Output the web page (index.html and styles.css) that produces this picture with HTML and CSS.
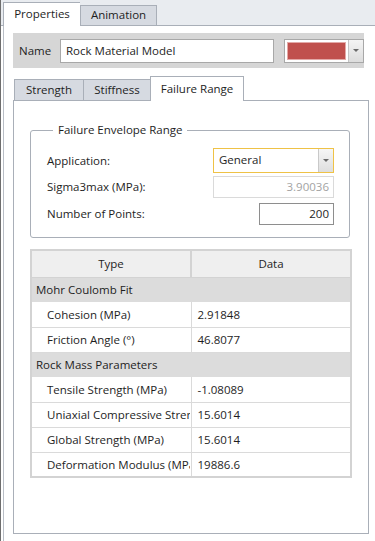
FILE: index.html
```html
<!DOCTYPE html>
<html lang="en">
<head>
    <meta charset="UTF-8">
    <meta name="viewport" content="width=device-width, initial-scale=1.0">
    <title>Rock Material Model</title>
    <link rel="stylesheet" href="styles.css">
</head>
<body>
    <div class="window">
        <div class="top-tabs">
            <div class="top-tab active">Properties</div>
            <div class="top-tab">Animation</div>
        </div>

        <div class="props-panel">
            <div class="name-band">
                <span class="name-label">Name</span>
                <div class="name-input">Rock Material Model</div>
                <div class="color-pick">
                    <div class="swatch-box"><div class="swatch"></div></div>
                    <div class="drop-btn"><span class="caret"></span></div>
                </div>
            </div>

            <div class="sub-tabs">
                <div class="sub-tab">Strength</div>
                <div class="sub-tab">Stiffness</div>
                <div class="sub-tab active">Failure Range</div>
            </div>

            <div class="sub-panel">
                <fieldset class="group">
                    <legend>Failure Envelope Range</legend>
                    <div class="field-row">
                        <span class="field-label">Application:</span>
                        <div class="combo">
                            <span class="combo-text">General</span>
                            <span class="combo-btn"><span class="caret"></span></span>
                        </div>
                    </div>
                    <div class="field-row">
                        <span class="field-label">Sigma3max (MPa):</span>
                        <div class="text-box disabled">3.90036</div>
                    </div>
                    <div class="field-row">
                        <span class="field-label">Number of Points:</span>
                        <div class="text-box short">200</div>
                    </div>
                </fieldset>

                <table class="grid">
                    <thead>
                        <tr><th>Type</th><th>Data</th></tr>
                    </thead>
                    <tbody>
                        <tr class="group-row"><td colspan="2">Mohr Coulomb Fit</td></tr>
                        <tr><td class="name-cell">Cohesion (MPa)</td><td>2.91848</td></tr>
                        <tr><td class="name-cell">Friction Angle (°)</td><td>46.8077</td></tr>
                        <tr class="group-row"><td colspan="2">Rock Mass Parameters</td></tr>
                        <tr><td class="name-cell">Tensile Strength (MPa)</td><td>-1.08089</td></tr>
                        <tr><td class="name-cell"><span class="clip">Uniaxial Compressive Strength (MPa)</span></td><td>15.6014</td></tr>
                        <tr><td class="name-cell">Global Strength (MPa)</td><td>15.6014</td></tr>
                        <tr><td class="name-cell"><span class="clip">Deformation Modulus (MPa)</span></td><td>19886.6</td></tr>
                    </tbody>
                </table>
            </div>
        </div>
    </div>
</body>
</html>
```

FILE: styles.css
```css
* {
    margin: 0;
    padding: 0;
    box-sizing: border-box;
}

body {
    font-family: 'Open Sans', 'Noto Sans', sans-serif;
    font-size: 11.5px;
    color: #1e1e1e;
    background: #ffffff;
}

.window {
    width: 375px;
    height: 541px;
    overflow: hidden;
    border-left: 1px solid #6e6e6e;
}

/* 上のタブ */
.top-tabs {
    height: 26px;
    background: #e9ecf0;
    border-bottom: 1px solid #a9afb8;
    display: flex;
    align-items: flex-end;
    padding-left: 2px;
}

.top-tab {
    height: 20px;
    line-height: 18px;
    background: #d6dae1;
    border: 1px solid #a9afb8;
    border-bottom: none;
    width: 77px;
    text-align: center;
    white-space: nowrap;
}

.top-tab.active {
    height: 24px;
    line-height: 21px;
    background: #ffffff;
    margin-bottom: -1px;
    border-right: none;
}

.props-panel {
    height: 515px;
    margin-left: 2px;
    border-left: 1px solid #b9bec6;
    padding: 7px 0 0 9px;
}

.name-band {
    width: 351px;
    height: 35px;
    background: #d6d6d6;
    display: flex;
    align-items: center;
    padding-left: 6px;
}

.name-label {
    width: 41px;
}

.name-input {
    width: 214px;
    height: 24px;
    background: #ffffff;
    border: 1px solid #a8a8a8;
    padding-left: 5px;
    line-height: 21px;
}

.color-pick {
    margin-left: 10px;
    width: 80px;
    height: 24px;
    display: flex;
    border: 1px solid #a8a8a8;
    background: #ffffff;
}

.swatch-box {
    flex: 1;
    padding: 2px;
}

.swatch {
    height: 100%;
    background: #c0504d;
    border: 1px solid #e3a9a7;
}

.drop-btn {
    width: 15px;
    border-left: 1px solid #c4c4c4;
    background: linear-gradient(#f4f4f4, #dcdcdc);
    display: flex;
    align-items: center;
    justify-content: center;
}

.caret {
    width: 0;
    height: 0;
    border-left: 3px solid transparent;
    border-right: 3px solid transparent;
    border-top: 3px solid #6a6a6a;
}

/* 下のタブ */
.sub-tabs {
    margin-top: 7px;
    height: 25px;
    display: flex;
    align-items: flex-end;
    padding-left: 1px;
}

.sub-tab {
    height: 21px;
    line-height: 20px;
    text-align: center;
    background: #d6dae1;
    border: 1px solid #a9afb8;
    border-bottom: none;
    border-right: none;
    white-space: nowrap;
}

.sub-tab:nth-child(1) {
    width: 69px;
}

.sub-tab:nth-child(2) {
    width: 67px;
}

.sub-tab.active {
    height: 25px;
    line-height: 24px;
    width: 94px;
    background: #ffffff;
    border-right: 1px solid #a9afb8;
    margin-bottom: -1px;
    position: relative;
}

.sub-panel {
    width: 356px;
    height: 434px;
    border: 1px solid #a9afb8;
    padding: 22px 0 0 16px;
}

.group {
    width: 320px;
    height: 115px;
    border: 1px solid #a9afb8;
    border-radius: 3px;
    padding: 0 15px 0 16px;
}

.group legend {
    margin-left: 6px;
    padding: 0 4px 0 5px;
    line-height: 14px;
}

.field-row {
    display: flex;
    align-items: center;
    justify-content: space-between;
    height: 25px;
}

.field-row:first-of-type {
    margin-top: 11px;
}

.field-row + .field-row {
    margin-top: 1px;
}

.field-row:last-child {
    margin-top: 2px;
}

.combo {
    width: 121px;
    height: 25px;
    border: 1px solid #efc246;
    display: flex;
    background: #ffffff;
}

.combo-text {
    flex: 1;
    padding-left: 5px;
    line-height: 22px;
}

.combo-btn {
    width: 15px;
    border-left: 1px solid #c9c9c9;
    background: linear-gradient(#f6f6f6, #dedede);
    display: flex;
    align-items: center;
    justify-content: center;
}

.text-box {
    width: 121px;
    height: 22px;
    border: 1px solid #8e8e8e;
    text-align: right;
    padding-right: 4px;
    line-height: 20px;
}

.text-box.disabled {
    border-color: #dadada;
    color: #a3a3a3;
}

.text-box.short {
    width: 75px;
}

/* 表 */
.grid {
    margin-top: 11px;
    width: 322px;
    border-collapse: collapse;
    border: 2px solid #d3d3d3;
    table-layout: fixed;
}

.grid th {
    height: 27px;
    background: #efefef;
    font-weight: normal;
    border-right: 2px solid #d3d3d3;
    border-bottom: 1px solid #d3d3d3;
}

.grid td {
    height: 25px;
    padding: 0 0 0 6px;
    border-bottom: 1px solid #dadada;
    border-right: 1px solid #dadada;
    white-space: nowrap;
    overflow: hidden;
}

.grid td.name-cell {
    padding-left: 15px;
}

.clip {
    display: block;
    overflow: hidden;
    width: 143px;
}

.grid .group-row td {
    background: #dcdcdc;
    padding-left: 4px;
    border-bottom: none;
}
```
